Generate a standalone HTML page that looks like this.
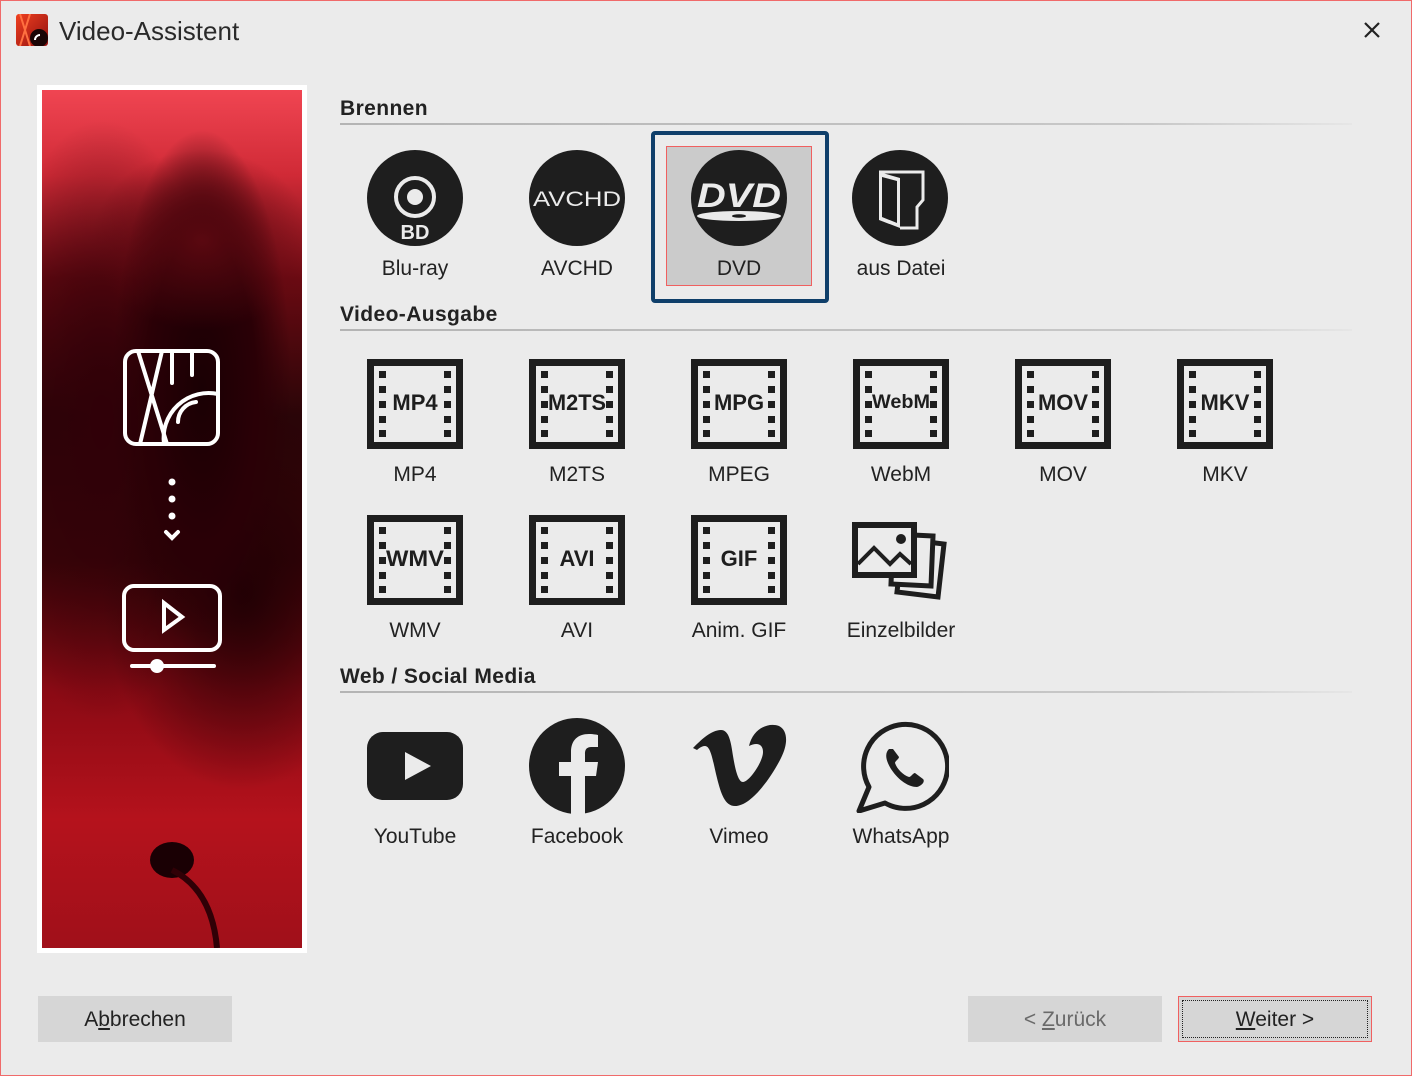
<!DOCTYPE html>
<html><head><meta charset="utf-8"><style>
*{margin:0;padding:0;box-sizing:border-box}
body{width:1412px;height:1076px;background:#ebebeb;font-family:"Liberation Sans",sans-serif;color:#222;position:relative;overflow:hidden}
.frame{position:absolute;left:0;top:0;width:1412px;height:1076px;border:1px solid #f06a6a}
.a{position:absolute}
.h{position:absolute;left:340px;font-weight:bold;font-size:21px;color:#222;letter-spacing:0.4px}
.ln{position:absolute;left:340px;width:1012px;height:2px;background:linear-gradient(90deg,#b4b4b4,#c8c8c8 80%,#e6e6e6)}
.lbl{position:absolute;width:160px;text-align:center;font-size:21px;color:#222}
.ic{position:absolute}
.btn{position:absolute;height:46px;background:#d6d6d6;font-size:21px;text-align:center;line-height:48px}
</style></head><body>
<div class="frame"></div>
<svg class="a" style="left:16px;top:14px" width="32" height="32" viewBox="0 0 32 32"><defs><linearGradient id="lg" x1="0" y1="0" x2="1" y2="1"><stop offset="0" stop-color="#f04020"/><stop offset="1" stop-color="#901010"/></linearGradient></defs><rect width="32" height="32" rx="3" fill="url(#lg)"/><path d="M4 0L14 32M14 0L4 32" stroke="#ff7040" stroke-width="2"/><circle cx="23" cy="24" r="9" fill="#1a0505"/><path d="M19 26a5 5 0 0 1 5-5" stroke="#fff" stroke-width="2" fill="none"/></svg>
<div class="a" style="left:59px;top:16px;font-size:26px;color:#2a2a2a">Video-Assistent</div>
<svg class="a" style="left:1363px;top:21px" width="18" height="18"><path d="M2 2L16 16M16 2L2 16" stroke="#222" stroke-width="2.2"/></svg>

<div class="a" style="left:37px;top:85px;width:270px;height:868px;background:#fff"></div>
<div class="a" style="left:42px;top:90px;width:260px;height:858px;background:
radial-gradient(ellipse 110px 90px at 160px 150px,#5a0810 0%,transparent 100%),
radial-gradient(ellipse 90px 260px at 160px 300px,#1a0004 0%,#2a0006 60%,transparent 100%),
radial-gradient(ellipse 140px 200px at 200px 500px,#200004,transparent 100%),
radial-gradient(ellipse 120px 300px at 60px 330px,#300008,transparent 100%),
linear-gradient(180deg,#f04552 0%,#d02a36 10%,#6a0a12 22%,#2a0508 38%,#3a0508 55%,#8a0a14 70%,#b5121c 85%,#a0101a 100%)"></div>
<svg class="a" style="left:42px;top:90px" width="260" height="858" viewBox="0 0 260 858">
<ellipse cx="130" cy="770" rx="22" ry="18" fill="#1a0004"/>
<path d="M130 780 Q170 800 175 858" stroke="#300006" stroke-width="6" fill="none"/>
<g stroke="#fff" stroke-width="4" fill="none" stroke-linecap="round">
<rect x="83" y="261" width="93" height="93" rx="11"/>
<path d="M96 261L125 354M120 261L98 354M130 261V293M150 261V285"/>
<path d="M122 354A45 45 0 0 1 176 304"/>
<path d="M136 332A20 20 0 0 1 154 312"/>
<rect x="82" y="496" width="96" height="64" rx="10"/>
<path d="M122 513L140 527L122 540Z"/>
<path d="M90 576H108M122 576H172"/>
<path d="M124 442L130 448L136 442"/>
</g>
<g fill="#fff"><circle cx="130" cy="392" r="3.5"/><circle cx="130" cy="409" r="3.5"/><circle cx="130" cy="426" r="3.5"/><circle cx="115" cy="576" r="7"/></g>
</svg>

<div class="h" style="top:97px">Brennen</div><div class="ln" style="top:123px"></div>
<div class="h" style="top:303px">Video-Ausgabe</div><div class="ln" style="top:329px"></div>
<div class="h" style="top:665px">Web / Social Media</div><div class="ln" style="top:691px"></div>

<div class="a" style="left:651px;top:131px;width:178px;height:172px;border:4px solid #0f3f6a;border-radius:4px"></div>
<div class="a" style="left:666px;top:146px;width:146px;height:140px;background:#cbcbcb;border:1px solid #f06060"></div>

<svg class="ic" style="left:367px;top:150px" width="96" height="96"><circle cx="48" cy="48" r="48" fill="#1e1e1e"/><circle cx="48" cy="47" r="19" stroke="#ebebeb" stroke-width="4" fill="none"/><circle cx="48" cy="47" r="8" fill="#ebebeb"/><text x="48" y="89" text-anchor="middle" font-weight="bold" font-size="20" fill="#ebebeb" font-family="Liberation Sans">BD</text></svg>
<svg class="ic" style="left:529px;top:150px" width="96" height="96"><circle cx="48" cy="48" r="48" fill="#1e1e1e"/><text x="48" y="56" text-anchor="middle" font-size="21" fill="#ebebeb" font-family="Liberation Sans" textLength="88" lengthAdjust="spacingAndGlyphs">AVCHD</text></svg>
<svg class="ic" style="left:691px;top:150px" width="96" height="96"><circle cx="48" cy="48" r="48" fill="#1e1e1e"/><text x="48" y="57" text-anchor="middle" font-weight="bold" font-style="italic" font-size="34" fill="#ebebeb" font-family="Liberation Sans" textLength="84" lengthAdjust="spacingAndGlyphs">DVD</text><ellipse cx="48" cy="66" rx="42" ry="5" fill="#ebebeb"/><ellipse cx="48" cy="66" rx="7" ry="1.8" fill="#1e1e1e"/></svg>
<svg class="ic" style="left:852px;top:150px" width="96" height="96"><circle cx="48" cy="48" r="48" fill="#1e1e1e"/><path d="M27 22H71V50L65 57V78H48" stroke="#ebebeb" stroke-width="3" fill="none"/><path d="M27 22L48 28V78L27 70Z" fill="#ebebeb"/><path d="M30 27L45 31V73L30 67Z" fill="#1e1e1e"/></svg>
<div class="lbl" style="left:335px;top:257px">Blu-ray</div>
<div class="lbl" style="left:497px;top:257px">AVCHD</div>
<div class="lbl" style="left:659px;top:257px">DVD</div>
<div class="lbl" style="left:821px;top:257px">aus Datei</div>

<svg width="0" height="0" style="position:absolute"><defs><g id="fr"><rect width="96" height="90" fill="#1e1e1e"/><rect x="7" y="7" width="82" height="76" fill="#ebebeb"/><g fill="#1e1e1e"><rect x="12" y="12" width="7" height="7"/><rect x="12" y="27" width="7" height="7"/><rect x="12" y="42" width="7" height="7"/><rect x="12" y="57" width="7" height="7"/><rect x="12" y="71" width="7" height="7"/><rect x="77" y="12" width="7" height="7"/><rect x="77" y="27" width="7" height="7"/><rect x="77" y="42" width="7" height="7"/><rect x="77" y="57" width="7" height="7"/><rect x="77" y="71" width="7" height="7"/></g></g></defs></svg>

<svg class="ic" style="left:367px;top:359px" width="96" height="90"><use href="#fr"/><text x="48" y="51" text-anchor="middle" font-weight="bold" font-size="22" fill="#1e1e1e" font-family="Liberation Sans">MP4</text></svg>
<svg class="ic" style="left:529px;top:359px" width="96" height="90"><use href="#fr"/><text x="48" y="51" text-anchor="middle" font-weight="bold" font-size="22" fill="#1e1e1e" font-family="Liberation Sans" textLength="58" lengthAdjust="spacingAndGlyphs">M2TS</text></svg>
<svg class="ic" style="left:691px;top:359px" width="96" height="90"><use href="#fr"/><text x="48" y="51" text-anchor="middle" font-weight="bold" font-size="22" fill="#1e1e1e" font-family="Liberation Sans">MPG</text></svg>
<svg class="ic" style="left:853px;top:359px" width="96" height="90"><use href="#fr"/><text x="48" y="49" text-anchor="middle" font-weight="bold" font-size="19" fill="#1e1e1e" font-family="Liberation Sans" textLength="58" lengthAdjust="spacingAndGlyphs">WebM</text></svg>
<svg class="ic" style="left:1015px;top:359px" width="96" height="90"><use href="#fr"/><text x="48" y="51" text-anchor="middle" font-weight="bold" font-size="22" fill="#1e1e1e" font-family="Liberation Sans">MOV</text></svg>
<svg class="ic" style="left:1177px;top:359px" width="96" height="90"><use href="#fr"/><text x="48" y="51" text-anchor="middle" font-weight="bold" font-size="22" fill="#1e1e1e" font-family="Liberation Sans">MKV</text></svg>
<div class="lbl" style="left:335px;top:463px">MP4</div>
<div class="lbl" style="left:497px;top:463px">M2TS</div>
<div class="lbl" style="left:659px;top:463px">MPEG</div>
<div class="lbl" style="left:821px;top:463px">WebM</div>
<div class="lbl" style="left:983px;top:463px">MOV</div>
<div class="lbl" style="left:1145px;top:463px">MKV</div>

<svg class="ic" style="left:367px;top:515px" width="96" height="90"><use href="#fr"/><text x="48" y="51" text-anchor="middle" font-weight="bold" font-size="22" fill="#1e1e1e" font-family="Liberation Sans" textLength="58" lengthAdjust="spacingAndGlyphs">WMV</text></svg>
<svg class="ic" style="left:529px;top:515px" width="96" height="90"><use href="#fr"/><text x="48" y="51" text-anchor="middle" font-weight="bold" font-size="22" fill="#1e1e1e" font-family="Liberation Sans">AVI</text></svg>
<svg class="ic" style="left:691px;top:515px" width="96" height="90"><use href="#fr"/><text x="48" y="51" text-anchor="middle" font-weight="bold" font-size="22" fill="#1e1e1e" font-family="Liberation Sans">GIF</text></svg>
<svg class="ic" style="left:852px;top:520px" width="98" height="84"><path d="M51 19L92 24L86 77L45 72Z" stroke="#1e1e1e" stroke-width="5" fill="#ebebeb"/><path d="M41 14L81 16L79 66L39 64Z" stroke="#1e1e1e" stroke-width="5" fill="#ebebeb"/><rect x="0" y="2" width="65" height="56" fill="#1e1e1e"/><rect x="6" y="8" width="53" height="44" fill="#ebebeb"/><path d="M6 44L22 28L38 44L48 34L59 44" stroke="#1e1e1e" stroke-width="4" fill="none"/><circle cx="49" cy="19" r="5" fill="#1e1e1e"/></svg>
<div class="lbl" style="left:335px;top:619px">WMV</div>
<div class="lbl" style="left:497px;top:619px">AVI</div>
<div class="lbl" style="left:659px;top:619px">Anim. GIF</div>
<div class="lbl" style="left:821px;top:619px">Einzelbilder</div>

<svg class="ic" style="left:367px;top:732px" width="96" height="68"><rect width="96" height="68" rx="16" fill="#1e1e1e"/><path d="M38 20L64 34L38 48Z" fill="#ebebeb"/></svg>
<svg class="ic" style="left:529px;top:718px" width="96" height="96"><circle cx="48" cy="48" r="48" fill="#1e1e1e"/><path d="M42 96V58H30V44H42V34C42 22 49 16 60 16C65 16 69 17 69 17V29H63C57 29 56 32 56 36V44H69L67 58H56V96Z" fill="#ebebeb"/></svg>
<svg class="ic" style="left:691px;top:722px" width="96" height="86"><path d="M2 26C10 18 20 8 30 8C38 8 40 20 42 34C45 52 48 60 52 60C58 60 72 40 72 30C72 22 66 20 58 24C62 6 78 0 88 4C96 8 98 20 90 36C80 56 60 84 44 84C34 84 30 72 26 56C22 40 20 24 14 24C10 24 6 28 6 28Z" fill="#1e1e1e"/></svg>
<svg class="ic" style="left:855px;top:719px" width="94" height="94"><path d="M14 68A42 42 0 1 1 30 84L4 92Z" stroke="#1e1e1e" stroke-width="5" fill="none" stroke-linejoin="round"/><path d="M34 30C30 34 30 40 36 50C44 62 54 68 62 68C68 66 70 62 68 60L60 54C58 54 56 58 54 58C48 56 42 50 40 44C40 42 44 40 44 38L38 30Z" fill="#1e1e1e"/></svg>
<div class="lbl" style="left:335px;top:825px">YouTube</div>
<div class="lbl" style="left:497px;top:825px">Facebook</div>
<div class="lbl" style="left:659px;top:825px">Vimeo</div>
<div class="lbl" style="left:821px;top:825px">WhatsApp</div>

<div class="btn" style="left:38px;top:996px;width:194px;color:#222">A<u>b</u>brechen</div>
<div class="btn" style="left:968px;top:996px;width:194px;color:#6a6a6a">&lt; <u>Z</u>urück</div>
<div class="btn" style="left:1178px;top:996px;width:194px;border:1px solid #f06060;color:#222;line-height:46px"><div style="position:absolute;left:3px;top:3px;right:3px;bottom:3px;border:1px dotted #222"></div><u>W</u>eiter &gt;</div>
</body></html>
